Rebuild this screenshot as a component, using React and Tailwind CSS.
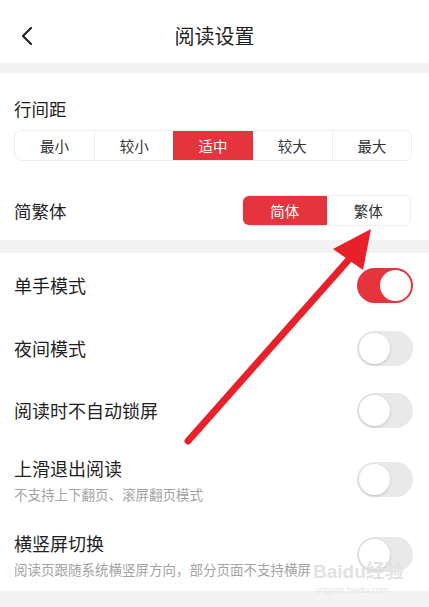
const font = { fontFamily: '"Noto Sans CJK SC", "Noto Sans", sans-serif' }

function Toggle({ on }) {
    if (on) {
        return (
            <div className="w-[56px] h-[35px] rounded-full bg-[#e5343d] flex items-center justify-end p-[2px]">
                <div className="w-[31px] h-[31px] rounded-full bg-white" />
            </div>
        )
    }
    return (
        <div className="w-[56px] h-[35px] rounded-full bg-[#e9e9e9] flex items-center justify-start p-[2px]">
            <div className="w-[31px] h-[31px] rounded-full bg-white shadow-[0_1px_3px_rgba(0,0,0,0.18)]" />
        </div>
    )
}

function Row({ title, sub, on, height }) {
    return (
        <div className={`flex items-center justify-between pl-[14px] pr-[16px] ${height}`}>
            <div className="flex flex-col">
                <span className="text-[18px] leading-[26px] text-[#1f1f1f]">{title}</span>
                {sub && <span className="text-[13.5px] leading-[18px] text-[#a3a3a3] mt-[4px]">{sub}</span>}
            </div>
            <Toggle on={on} />
        </div>
    )
}

export default function App() {
    const spacing = ['最小', '较小', '适中', '较大', '最大']

    return (
        <div className="relative w-full h-[607px] overflow-hidden bg-white" style={font}>
            <div className="relative h-[63px] flex items-center justify-center">
                <svg className="absolute left-[20px] top-[26px]" width="14" height="20" viewBox="0 0 14 20">
                    <path d="M11 2 L3 10 L11 18" fill="none" stroke="#222" strokeWidth="2.2" strokeLinecap="round" strokeLinejoin="round" />
                </svg>
                <span className="text-[20px] text-[#1f1f1f] mt-[8px]">阅读设置</span>
            </div>
            <div className="h-[10px] bg-[#f3f3f3]" />

            <div className="px-[14px] pt-[23px] pb-[14px]">
                <div className="text-[17.5px] leading-[26px] text-[#1f1f1f]">行间距</div>
                <div className="mt-[8px] grid grid-cols-5 h-[31px] border border-[#eeeeee] rounded-[7px] overflow-hidden mr-[3px]">
                    {spacing.map((s, i) => (
                        <div
                            key={s}
                            className={`flex items-center justify-center text-[14.5px] ${i === 2 ? 'bg-[#e5343d] text-white' : 'text-[#333]'} ${i > 0 && i !== 2 && i !== 3 ? 'border-l border-[#eeeeee]' : ''}`}
                        >
                            {s}
                        </div>
                    ))}
                </div>
                <div className="mt-[34px] flex items-center justify-between">
                    <span className="text-[17.5px] leading-[26px] text-[#1f1f1f]">简繁体</span>
                    <div className="grid grid-cols-2 w-[169px] h-[31px] border border-[#eeeeee] rounded-[7px] overflow-hidden mr-[4px]">
                        <div className="flex items-center justify-center bg-[#e5343d] text-white text-[14.5px]">简体</div>
                        <div className="flex items-center justify-center text-[#333] text-[14.5px]">繁体</div>
                    </div>
                </div>
            </div>
            <div className="h-[13px] bg-[#f3f3f3]" />

            <Row title="单手模式" on height="h-[64px]" />
            <Row title="夜间模式" height="h-[62px]" />
            <Row title="阅读时不自动锁屏" height="h-[62px]" />
            <Row title="上滑退出阅读" sub="不支持上下翻页、滚屏翻页模式" height="h-[76px]" />
            <Row title="横竖屏切换" sub="阅读页跟随系统横竖屏方向，部分页面不支持横屏" height="h-[74px]" />
            <div className="h-[20px] bg-[#f3f3f3]" />

            <div
                className="absolute left-[313px] top-[564px] text-[19px] leading-[16px] text-[#e2e2e2] font-bold pointer-events-none"
                style={{ fontFamily: '"Liberation Sans", "Noto Sans CJK SC", sans-serif' }}
            >
                Baidu经验
            </div>
            <div
                className="absolute left-[316px] top-[586px] text-[9px] leading-[9px] text-[#e6e6e6] pointer-events-none"
                style={{ fontFamily: '"Liberation Sans", sans-serif' }}
            >
                jingyan.baidu.com
            </div>

            <svg className="absolute left-0 top-0 pointer-events-none" width="429" height="607" viewBox="0 0 429 607">
                <line x1="188" y1="441" x2="352" y2="256" stroke="#e8202a" strokeWidth="7" strokeLinecap="round" />
                <polygon points="371,229 333,249 363,270" fill="#e8202a" />
            </svg>
        </div>
    )
}
